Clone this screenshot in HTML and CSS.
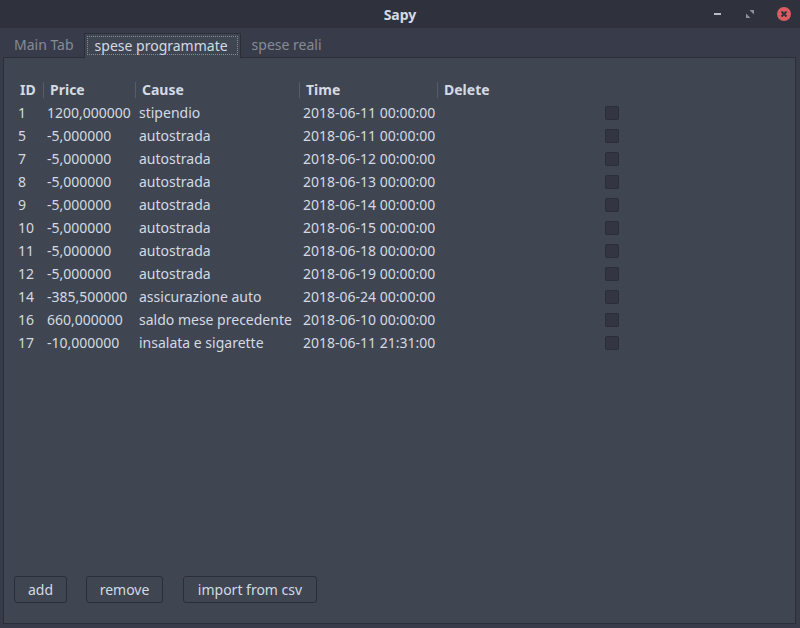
FILE: index.html
```html
<!DOCTYPE html>
<html>
<head>
<meta charset="utf-8">
<link rel="stylesheet" href="styles.css">
</head>
<body>
<div class="window">
  <div class="titlebar">
    <span class="title">Sapy</span>
    <div class="controls">
      <span class="ctl-min"></span>
      <svg class="ctl-max" width="8" height="8" viewBox="0 0 8 8"><path d="M3.5 0h4.5v4.5z M0 3.5v4.5h4.5z" fill="#8b909b"/></svg>
      <span class="ctl-close"><svg width="14" height="14" viewBox="0 0 14 14"><path d="M4.5 4.5l5 5M9.5 4.5l-5 5" stroke="#2f323c" stroke-width="1.8"/></svg></span>
    </div>
  </div>
  <div class="tabbar">
    <div class="tab">Main Tab</div>
    <div class="tab active"><span class="focus">spese programmate</span></div>
    <div class="tab">spese reali</div>
  </div>
  <div class="panel">
    <div class="table">
      <div class="row head">
        <div class="c id">ID</div><div class="c price">Price</div><div class="c cause">Cause</div><div class="c time">Time</div><div class="c del">Delete</div>
      </div>
      <div class="row"><div class="c id">1</div><div class="c price">1200,000000</div><div class="c cause">stipendio</div><div class="c time">2018-06-11 00:00:00</div><div class="c del"><span class="cb"></span></div></div>
      <div class="row"><div class="c id">5</div><div class="c price">-5,000000</div><div class="c cause">autostrada</div><div class="c time">2018-06-11 00:00:00</div><div class="c del"><span class="cb"></span></div></div>
      <div class="row"><div class="c id">7</div><div class="c price">-5,000000</div><div class="c cause">autostrada</div><div class="c time">2018-06-12 00:00:00</div><div class="c del"><span class="cb"></span></div></div>
      <div class="row"><div class="c id">8</div><div class="c price">-5,000000</div><div class="c cause">autostrada</div><div class="c time">2018-06-13 00:00:00</div><div class="c del"><span class="cb"></span></div></div>
      <div class="row"><div class="c id">9</div><div class="c price">-5,000000</div><div class="c cause">autostrada</div><div class="c time">2018-06-14 00:00:00</div><div class="c del"><span class="cb"></span></div></div>
      <div class="row"><div class="c id">10</div><div class="c price">-5,000000</div><div class="c cause">autostrada</div><div class="c time">2018-06-15 00:00:00</div><div class="c del"><span class="cb"></span></div></div>
      <div class="row"><div class="c id">11</div><div class="c price">-5,000000</div><div class="c cause">autostrada</div><div class="c time">2018-06-18 00:00:00</div><div class="c del"><span class="cb"></span></div></div>
      <div class="row"><div class="c id">12</div><div class="c price">-5,000000</div><div class="c cause">autostrada</div><div class="c time">2018-06-19 00:00:00</div><div class="c del"><span class="cb"></span></div></div>
      <div class="row"><div class="c id">14</div><div class="c price">-385,500000</div><div class="c cause">assicurazione auto</div><div class="c time">2018-06-24 00:00:00</div><div class="c del"><span class="cb"></span></div></div>
      <div class="row"><div class="c id">16</div><div class="c price">660,000000</div><div class="c cause">saldo mese precedente</div><div class="c time">2018-06-10 00:00:00</div><div class="c del"><span class="cb"></span></div></div>
      <div class="row"><div class="c id">17</div><div class="c price">-10,000000</div><div class="c cause">insalata e sigarette</div><div class="c time">2018-06-11 21:31:00</div><div class="c del"><span class="cb"></span></div></div>
    </div>
    <div class="buttons">
      <button class="btn b-add">add</button>
      <button class="btn b-remove">remove</button>
      <button class="btn b-import">import from csv</button>
    </div>
  </div>
</div>
</body>
</html>
```

FILE: styles.css
```css
* { box-sizing: border-box; }
html, body { margin: 0; padding: 0; }
body {
  width: 800px;
  height: 628px;
  background: #383c4a;
  font-family: "Noto Sans", "Open Sans", sans-serif;
  font-size: 14px;
  color: #d3dae3;
  overflow: hidden;
}
.window {
  display: flex;
  flex-direction: column;
  height: 628px;
}
.titlebar {
  height: 28px;
  background: #2f323c;
  display: flex;
  align-items: center;
  justify-content: center;
  position: relative;
  flex: none;
}
.title {
  font-weight: bold;
  font-size: 14px;
  color: #d3dae3;
}
.controls {
  position: absolute;
  right: 9px;
  top: 0;
  height: 28px;
  display: flex;
  align-items: center;
}
.ctl-min {
  width: 7px;
  height: 2px;
  background: #b8bcc4;
  margin-right: 25px;
}
.ctl-max { margin-right: 23px; }
.ctl-close {
  width: 14px;
  height: 14px;
  border-radius: 50%;
  background: #d95d62;
  display: flex;
}
.tabbar {
  display: flex;
  align-items: flex-end;
  height: 29px;
  padding-left: 4px;
  flex: none;
  position: relative;
  z-index: 1;
}
.tab {
  height: 24px;
  line-height: 24px;
  padding: 0 10px;
  color: #868b96;
}
.tab.active {
  background: #404552;
  border: 1px solid #2b2e37;
  border-bottom: none;
  height: 25px;
  padding: 2px 2px 0;
  margin-bottom: -1px;
  margin-right: 1px;
}
.focus {
  display: block;
  border: 1px dotted #868b96;
  height: 19px;
  line-height: 18px;
  padding: 0 9px 0 7px;
  color: #d3dae3;
}
.panel {
  flex: 1;
  margin: 0 4px 4px 3px;
  background: #404552;
  border: 1px solid #2b2e37;
  display: flex;
  flex-direction: column;
  padding: 21px 9px 20px 10px;
}
.table {
  display: flex;
  flex-direction: column;
}
.row {
  display: flex;
  height: 23px;
  align-items: center;
}
.row.head {
  height: 22px;
  font-weight: bold;
}
.c {
  padding-left: 4px;
  white-space: nowrap;
}
.head .c { padding-left: 6px; line-height: 16px; }
.head .c + .c { border-left: 1px solid #575c68; }
.id { width: 29px; }
.price { width: 92px; }
.cause { width: 164px; }
.time { width: 138px; }
.del { flex: 1; }
.row:not(.head) .del {
  display: flex;
  justify-content: center;
  padding-left: 0;
}
.cb {
  width: 14px;
  height: 14px;
  border-radius: 2px;
  background: #333642;
  border: 1px solid #2b2e37;
}
.buttons {
  margin-top: auto;
  display: flex;
}
.btn {
  font-family: "Noto Sans", "Open Sans", sans-serif;
  font-size: 14px;
  color: #d3dae3;
  background: #404552;
  border: 1px solid #2b2e37;
  border-radius: 3px;
  height: 27px;
  padding: 0;
}
.b-add { width: 53px; margin-right: 19px; }
.b-remove { width: 77px; margin-right: 20px; }
.b-import { width: 134px; }
```
